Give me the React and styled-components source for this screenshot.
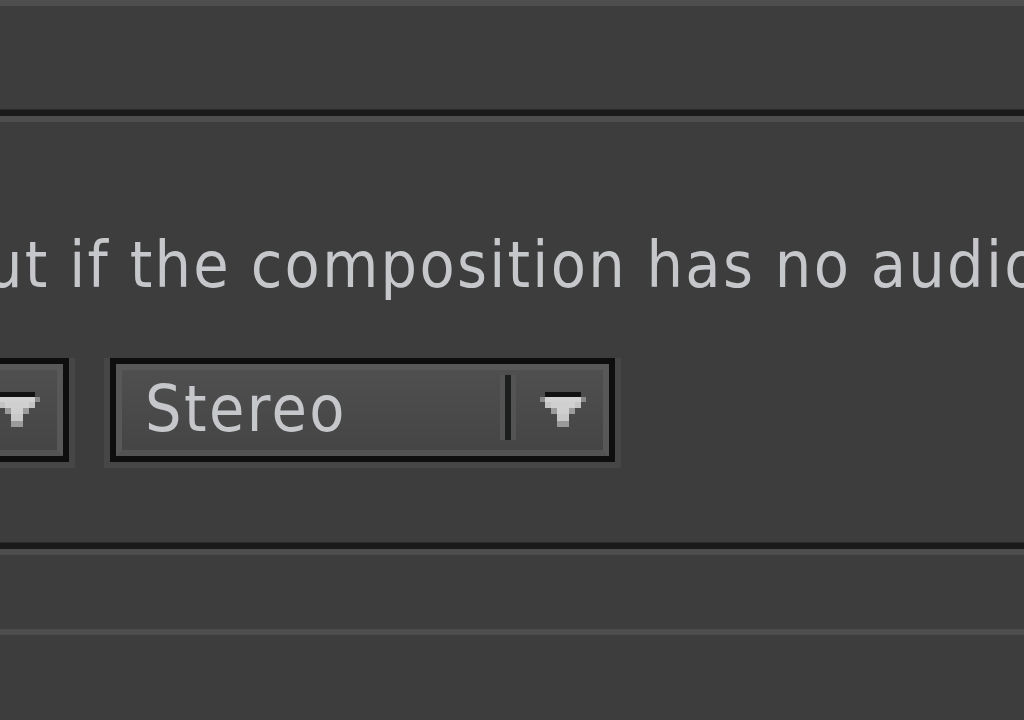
import React from "react";
import styled, { createGlobalStyle } from "styled-components";

const Global = createGlobalStyle`
  html, body { margin: 0; padding: 0; background: #3d3d3d; overflow: hidden; }
  body { width: 1024px; height: 720px; font-family: "DejaVu Sans Condensed", "DejaVu Sans", sans-serif; }
  #root { width: 1024px; height: 720px; overflow: hidden; }
`;

const Page = styled.div`
  display: flex;
  flex-direction: column;
  width: 1024px;
  height: 720px;
  overflow: hidden;
  background: #3d3d3d;
`;

const Highlight = styled.div`
  flex: none;
  height: 6px;
  background: #4e4e4e;
`;

const Divider = styled.div`
  flex: none;
  height: 13px;
  border-top: 1px solid #2c2c2c;
  border-bottom: 6px solid #4e4e4e;
  background: #1a1a1a;
  box-sizing: border-box;
`;

const Spacer = styled.div`
  flex: none;
  height: ${(p) => p.$h}px;
`;

const Section = styled.div`
  flex: none;
  height: ${(p) => p.$h}px;
  display: flex;
  flex-direction: column;
  padding-top: ${(p) => p.$pt}px;
  box-sizing: border-box;
`;

const Label = styled.div`
  font-size: 64px;
  line-height: 74.5px;
  letter-spacing: 2.3px;
  word-spacing: -1px;
  color: #c5c7ca;
  white-space: nowrap;
  margin-left: -14px;
`;

const Row = styled.div`
  display: flex;
  gap: 29px;
  margin-top: 55px;
  margin-left: ${(p) => p.$ml}px;
`;

const DropWrap = styled.div`
  flex: none;
  padding: 0 6px 6px 6px;
  background: #464646;
  width: ${(p) => p.$w}px;
  box-sizing: border-box;
`;

const Frame = styled.div`
  border: 6px solid #0e0e0e;
  height: 104px;
  box-sizing: border-box;
`;

const Face = styled.div`
  height: 100%;
  box-sizing: border-box;
  border: 6px solid #585858;
  border-bottom-color: #535353;
  background: linear-gradient(#4f4f4f, #454545);
  display: flex;
  align-items: center;
`;

const Value = styled.div`
  flex: 1;
  min-width: 0;
  padding-left: 23px;
  font-size: 64px;
  line-height: 74.5px;
  letter-spacing: 2.4px;
  color: #c5c7ca;
  white-space: nowrap;
  overflow: hidden;
`;

const Sep = styled.div`
  flex: none;
  align-self: flex-start;
  margin-top: 5px;
  width: 16px;
  height: 65px;
  box-sizing: border-box;
  border-left: 5px solid #545454;
  border-right: 5px solid #545454;
  background: #1c1e1e;
`;

const ArrowArea = styled.div`
  flex: none;
  width: 87px;
  box-sizing: border-box;
  padding-left: 24px;
  display: flex;
  align-items: center;
`;

const Arrow = () => (
  <svg width="46" height="35" viewBox="0 0 46 35" shapeRendering="crispEdges">
    <rect x="5" y="0" width="36" height="5" fill="#121212" />
    <rect x="0" y="5" width="46" height="5" fill="#8a8a8a" />
    <rect x="5" y="5" width="36" height="5" fill="#d2d2d2" />
    <rect x="5" y="10" width="36" height="6" fill="#c4c4c4" />
    <rect x="11" y="10" width="24" height="6" fill="#d0d0d0" />
    <rect x="11" y="16" width="24" height="6" fill="#9c9c9c" />
    <rect x="17" y="16" width="12" height="6" fill="#cfcfcf" />
    <rect x="17" y="22" width="12" height="7" fill="#c8c8c8" />
    <rect x="17" y="29" width="12" height="6" fill="#9a9a9a" />
  </svg>
);

const Dropdown = ({ value, width }) => (
  <DropWrap $w={width}>
    <Frame>
      <Face>
        <Value>{value}</Value>
        <Sep />
        <ArrowArea>
          <Arrow />
        </ArrowArea>
      </Face>
    </Frame>
  </DropWrap>
);

export default function App() {
  return (
    <Page>
      <Global />
      <Highlight />
      <Spacer $h={103} />
      <Divider />
      <Section $h={420} $pt={106}>
        <Label>ut if the composition has no audio</Label>
        <Row $ml={-442}>
          <Dropdown value="16 Bit" width={517} />
          <Dropdown value="Stereo" width={517} />
        </Row>
      </Section>
      <Divider />
      <Spacer $h={74} />
      <Highlight />
    </Page>
  );
}
